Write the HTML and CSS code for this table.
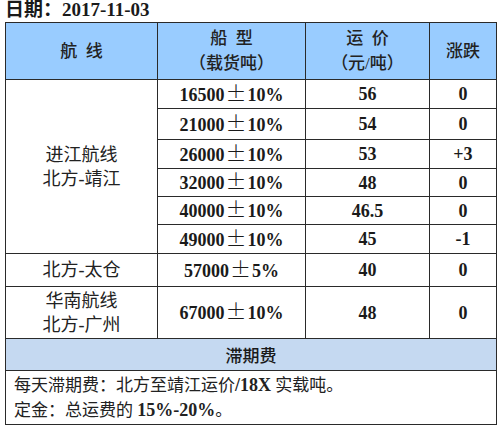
FILE: index.html
```html
<!DOCTYPE html>
<html lang="zh">
<head>
<meta charset="utf-8">
<link rel="stylesheet" href="styles.css">
</head>
<body>
<div class="date">日期：2017-11-03</div>
<table class="rates">
  <colgroup>
    <col class="c1"><col class="c2"><col class="c3"><col class="c4">
  </colgroup>
  <tr class="head">
    <th>航&nbsp;&nbsp;线</th>
    <th>船&nbsp;&nbsp;型<br>（载货吨）</th>
    <th>运&nbsp;&nbsp;价<br>（元/吨）</th>
    <th>涨跌</th>
  </tr>
  <tr class="r29">
    <td rowspan="6" class="route">进江航线<br>北方-靖江</td>
    <td class="num">16500<span class="pm">±</span>10%</td><td class="num">56</td><td class="num">0</td>
  </tr>
  <tr class="r31"><td class="num">21000<span class="pm">±</span>10%</td><td class="num">54</td><td class="num">0</td></tr>
  <tr class="r29"><td class="num">26000<span class="pm">±</span>10%</td><td class="num">53</td><td class="num">+3</td></tr>
  <tr class="r28"><td class="num">32000<span class="pm">±</span>10%</td><td class="num">48</td><td class="num">0</td></tr>
  <tr class="r28"><td class="num">40000<span class="pm">±</span>10%</td><td class="num">46.5</td><td class="num">0</td></tr>
  <tr class="r29"><td class="num">49000<span class="pm">±</span>10%</td><td class="num">45</td><td class="num">-1</td></tr>
  <tr class="r33">
    <td class="route">北方-太仓</td>
    <td class="num">57000<span class="pm">±</span>5%</td><td class="num">40</td><td class="num">0</td>
  </tr>
  <tr class="r52">
    <td class="route">华南航线<br>北方-广州</td>
    <td class="num">67000<span class="pm">±</span>10%</td><td class="num">48</td><td class="num">0</td>
  </tr>
  <tr class="sub">
    <td colspan="4">滞期费</td>
  </tr>
  <tr class="notes">
    <td colspan="4">每天滞期费：北方至靖江运价<b>/18X</b> 实载吨。<br>定金：总运费的 <b>15%-20%</b>。</td>
  </tr>
</table>
</body>
</html>
```

FILE: styles.css
```css
html, body {
  margin: 0;
  padding: 0;
  background: #ffffff;
}
body {
  width: 500px;
  height: 430px;
  overflow: hidden;
  font-family: "Liberation Serif", "Noto Sans CJK SC", serif;
  color: #1a1a1a;
}
.date {
  height: 22px;
  line-height: 20px;
  padding-left: 5px;
  font-size: 19px;
  font-weight: bold;
}
.rates {
  margin-left: 5px;
  width: 491px;
  border-collapse: collapse;
  table-layout: fixed;
  border: 1.5px solid #3a3a3a;
}
.c1 { width: 152px; }
.c2 { width: 148px; }
.c3 { width: 124px; }
.c4 { width: 67px; }
.rates th, .rates td {
  border: 1px solid #2a2a2a;
  padding: 0;
  text-align: center;
  vertical-align: middle;
}
.head { height: 57px; }
.head th {
  background: #99ccff;
  font-size: 17px;
  line-height: 25px;
  font-weight: 500;
  color: #222;
}
.r28 { height: 28px; }
.r29 { height: 29px; }
.r31 { height: 31px; }
.r33 { height: 33px; }
.r52 { height: 52px; }
.num {
  font-size: 18px;
  line-height: 22px;
  font-weight: bold;
}
.pm {
  font-family: "Noto Sans CJK SC", sans-serif;
  font-size: 21px;
  font-weight: 300;
  line-height: 18px;
  padding: 0 1px;
}
.route {
  font-size: 18px;
  line-height: 24px;
  font-weight: normal;
  color: #222;
}
.sub { height: 32px; }
.sub td {
  background: #c5d9f1;
  font-size: 17px;
  font-weight: 500;
}
.notes { height: 54px; }
.notes td {
  text-align: left;
  padding-left: 8px;
  font-size: 17px;
  line-height: 25px;
  color: #222;
}
.notes b { font-weight: bold; font-size: 18px; }
```
